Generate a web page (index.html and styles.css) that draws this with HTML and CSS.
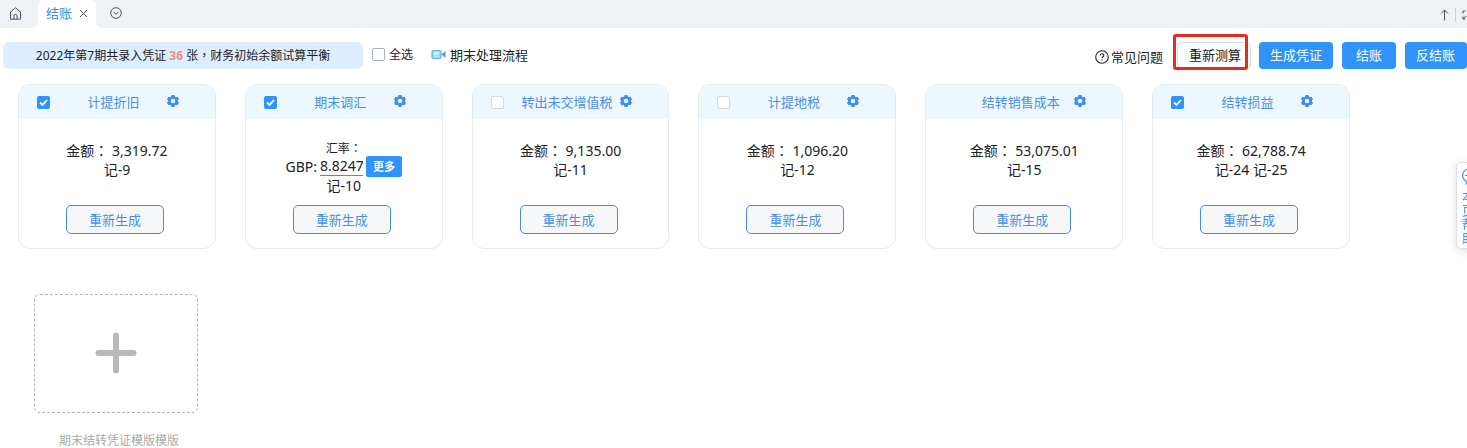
FILE: index.html
```html
<!DOCTYPE html>
<html lang="zh-CN">
<head>
<meta charset="utf-8">
<title>结账</title>
<link rel="stylesheet" href="styles.css">
</head>
<body>
<svg class="sprite" aria-hidden="true">
  <symbol id="gear" viewBox="0 0 12 12">
    <path fill-rule="evenodd" d="M4.600 0h2.800l.5 1.600 1 .6 1.700-.4L12 4.200l-1.100 1.300v1L12 7.800l-1.400 2.400-1.700-.4-1 .6-.5 1.600H4.600l-.5-1.600-1-.6-1.700.400L0 7.800l1.100-1.300v-1L0 4.200l1.400-2.400 1.700.4 1-.6zM6 3.700a2.300 2.300 0 1 0 0 4.600 2.300 2.300 0 0 0 0-4.600z"/>
  </symbol>
</svg>

<header class="tabs">
  <button class="icon-btn home" aria-label="首页">
    <svg width="13" height="13" viewBox="0 0 13 13"><path d="M1 5.500 6.500.8 12 5.500M1.600 5.200v7h9.800v-7M5 12V8.800a1.500 1.500 0 0 1 3 0V12"/></svg>
  </button>
  <div class="tab">
    <a class="tab-link" href="#">结账</a>
    <button class="icon-btn" aria-label="关闭">
      <svg width="9" height="9" viewBox="0 0 9 9"><path d="m1 1 7 7M8 1 1 8"/></svg>
    </button>
  </div>
  <button class="icon-btn more-tabs" aria-label="更多标签">
    <svg width="12" height="12" viewBox="0 0 12 12"><circle cx="6" cy="6" r="5.300"/><path d="m3.600 5 2.400 2.200L8.400 5"/></svg>
  </button>
  <div class="window-tools">
    <button class="icon-btn" aria-label="收起">
      <svg width="9" height="12" viewBox="0 0 9 12"><path d="M4.500 11.500V1M1 4.500 4.500 1 8 4.500"/></svg>
    </button>
    <span class="divider"></span>
    <button class="icon-btn" aria-label="全屏">
      <svg width="10" height="10" viewBox="0 0 10 10"><path d="M3.500 1H1v2.500M6.500 1H9v2.500M1 6.500V9h2.500M9 6.500V9H6.500M1 9l3-3"/></svg>
    </button>
  </div>
</header>

<div class="toolbar">
  <p class="summary">2022年第7期共录入凭证 <b>36</b> 张<span class="punct" lang="zh-TW">，</span>财务初始余额试算平衡</p>
  <label class="select-all"><input class="check" type="checkbox">全选</label>
  <a class="flow" href="#">
    <svg width="15" height="11" viewBox="0 0 15 11"><path class="cam" d="M2.500 1.500h6q1.500 0 1.500 1.500v5q0 1.500-1.500 1.500h-6Q1 9.500 1 8V3q0-1.500 1.500-1.500z"/><path class="lens" d="m10.500 5.500 4-3.500v7z"/><path class="spot" d="M3 4.500h4"/></svg>
    期末处理流程
  </a>
  <div class="actions">
    <a class="faq" href="#">
      <svg width="14" height="14" viewBox="0 0 14 14"><circle cx="7" cy="7" r="6.300"/><path d="M5.200 5.600c0-2.400 3.600-2.400 3.600-.1C8.800 6.800 7 6.800 7 8.300M7 9.400v1.200"/></svg>
      常见问题
    </a>
    <div class="marked"><button class="btn btn-plain">重新测算</button></div>
    <button class="btn">生成凭证</button>
    <button class="btn btn-wide">结账</button>
    <button class="btn">反结账</button>
  </div>
</div>

<main class="cards">
  <section class="card">
    <div class="card-head"><input class="check" type="checkbox" aria-label="计提折旧" checked><h2>计提折旧</h2><button class="gear" aria-label="设置"><svg><use href="#gear"/></svg></button></div>
    <div class="card-body"><p>金额<span class="punct" lang="zh-TW">：</span> 3,319.72</p><p>记-9</p></div>
    <button class="redo">重新生成</button>
  </section>
  <section class="card">
    <div class="card-head"><input class="check" type="checkbox" aria-label="期末调汇" checked><h2>期末调汇</h2><button class="gear" aria-label="设置"><svg><use href="#gear"/></svg></button></div>
    <div class="card-body">
      <p class="rate-title">汇率<span class="punct" lang="zh-TW">：</span></p>
      <div class="rate"><label for="gbp">GBP:</label><input id="gbp" type="text" value="8.8247"><button class="more">更多</button></div>
      <p>记-10</p>
    </div>
    <button class="redo">重新生成</button>
  </section>
  <section class="card">
    <div class="card-head"><input class="check" type="checkbox" aria-label="转出未交增值税"><h2>转出未交增值税</h2><button class="gear" aria-label="设置"><svg><use href="#gear"/></svg></button></div>
    <div class="card-body"><p>金额<span class="punct" lang="zh-TW">：</span> 9,135.00</p><p>记-11</p></div>
    <button class="redo">重新生成</button>
  </section>
  <section class="card">
    <div class="card-head"><input class="check" type="checkbox" aria-label="计提地税"><h2>计提地税</h2><button class="gear" aria-label="设置"><svg><use href="#gear"/></svg></button></div>
    <div class="card-body"><p>金额<span class="punct" lang="zh-TW">：</span> 1,096.20</p><p>记-12</p></div>
    <button class="redo">重新生成</button>
  </section>
  <section class="card">
    <div class="card-head"><span></span><h2>结转销售成本</h2><button class="gear" aria-label="设置"><svg><use href="#gear"/></svg></button></div>
    <div class="card-body"><p>金额<span class="punct" lang="zh-TW">：</span> 53,075.01</p><p>记-15</p></div>
    <button class="redo">重新生成</button>
  </section>
  <section class="card">
    <div class="card-head"><input class="check" type="checkbox" aria-label="结转损益" checked><h2>结转损益</h2><button class="gear" aria-label="设置"><svg><use href="#gear"/></svg></button></div>
    <div class="card-body"><p>金额<span class="punct" lang="zh-TW">：</span> 62,788.74</p><p>记-24 记-25</p></div>
    <button class="redo">重新生成</button>
  </section>
  <div class="add">
    <button class="add-box" aria-label="新增模版"><svg width="42" height="42" viewBox="0 0 42 42"><path d="M21 3.500v35M3.500 21h35"/></svg></button>
    <p>期末结转凭证模版模版</p>
  </div>
</main>

<button class="help">
  <svg width="16" height="18" viewBox="0 0 16 18"><path d="M5.500 13.500a6.500 6.500 0 1 1 5 0M5.500 13.500v2.500h5v-2.500M4 7.500h2l1-1.500 1 1.500h2"/></svg>
  <span>本页帮助</span>
</button>
</body>
</html>
```
FILE: styles.css
```css
* { box-sizing: border-box; }

body {
  margin: 0;
  min-height: 100vh;
  overflow: hidden;
  background: #fff;
  color: #222;
  font: 13px/18px "Noto Sans", "Noto Sans CJK SC", sans-serif;
}

p, h2 { margin: 0; }
a { color: inherit; text-decoration: none; }
button { margin: 0; padding: 0; border: 0; background: none; color: inherit; font: inherit; cursor: pointer; }
svg { display: block; fill: none; flex: none; }
.sprite { position: absolute; width: 0; height: 0; }
.punct { font-family: "Noto Sans CJK TC", sans-serif; line-height: 1; }

.tabs { display: flex; align-items: center; height: 28px; background: #eef2f5; padding-left: 9px; }
.icon-btn svg { stroke: #46505c; stroke-width: 1; }
.home, .more-tabs { padding-bottom: 2px; }
.tab {
  position: relative;
  display: flex;
  align-items: center;
  gap: 7px;
  height: 28px;
  margin: 0 14px 0 16px;
  padding: 0 8px 2px;
  border-radius: 6px 6px 0 0;
  background: #fff;
}
.tab::before, .tab::after { content: ""; position: absolute; bottom: 0; width: 6px; height: 6px; }
.tab::before { right: 100%; background: radial-gradient(circle at 0 0, #eef2f5 6px, #fff 6px); }
.tab::after { left: 100%; background: radial-gradient(circle at 100% 0, #eef2f5 6px, #fff 6px); }
.tab-link { color: #3f8ae8; }
.window-tools { display: flex; align-items: center; gap: 6px; margin: 2px -5px 0 auto; }
.divider { width: 1px; height: 14px; background: #c9ced4; }

.toolbar { display: flex; align-items: center; height: 27px; margin-top: 14px; padding-left: 3px; }
.summary {
  width: 360px;
  height: 27px;
  border-radius: 6px;
  background: #deedff;
  font-size: 12px;
  line-height: 27px;
  text-align: center;
}
.summary b { color: #f28b7d; }

.check {
  flex: none;
  appearance: none;
  width: 13px;
  height: 13px;
  margin: 0;
  border: 1px solid #d9d9d9;
  border-radius: 2px;
  background: #fff;
}
.check:checked {
  border-color: #2f93fb;
  background: #2f93fb url("data:image/svg+xml,%3Csvg xmlns='http://www.w3.org/2000/svg' viewBox='0 0 11 11'%3E%3Cpath d='M2 5.500l2.500 2.500L9 3' fill='none' stroke='white' stroke-width='1.800'/%3E%3C/svg%3E");
}
.select-all { display: flex; align-items: center; gap: 4px; margin-left: 9px; padding-bottom: 1px; font-size: 12px; }
.select-all .check { border-color: #a9afc4; margin-bottom: 2px; }
.flow { display: flex; align-items: center; gap: 4px; margin-left: 18px; padding-bottom: 2px; }
.cam { fill: #a9def3; stroke: #5fb0d8; stroke-width: 1.2; }
.lens { fill: #4c9fd0; }
.spot { stroke: #fff; stroke-width: 1.5; }

.actions { display: flex; align-items: center; gap: 9px; margin-left: auto; }
.faq { display: flex; align-items: center; gap: 2px; padding-top: 2px; }
.faq svg { stroke: #222; stroke-width: 1.1; }
.btn { height: 27px; padding: 0 11px 2px; border-radius: 4px; background: #2f93fb; color: #fff; white-space: nowrap; }
.btn-wide { padding: 0 14px 2px; }
.btn:last-child { padding-right: 12px; }
.marked .btn-plain { padding: 0 9px 2px 11px; border: 1px solid #d9dee6; background: #f8fcff; color: #222; }
.marked { position: relative; margin: 0 -1px 0 5px; }
.marked::after {
  content: "";
  position: absolute;
  inset: -8px 3px -1px -4px;
  border: 3px solid #e8291f;
  border-radius: 3px;
  pointer-events: none;
}

.cards {
  display: grid;
  grid-template-columns: repeat(auto-fill, minmax(190px, 1fr));
  gap: 45px 29px;
  padding: 15px 117px 0 18px;
}
.card {
  display: flex;
  flex-direction: column;
  align-items: center;
  height: 165px;
  padding-bottom: 14px;
  border: 1px solid #e3eaf0;
  border-radius: 12px;
  overflow: hidden;
}
.card-head {
  display: grid;
  grid-template-columns: 13px 1fr 12px;
  align-items: center;
  width: 100%;
  height: 34px;
  padding: 0 36px 0 18px;
  background: #edf7ff;
}
.card-head h2 { padding-left: 10px; color: #4a90e2; font-size: 13px; font-weight: 400; text-align: center; white-space: nowrap; }
.gear { padding-bottom: 2px; }
.gear svg { width: 12px; height: 12px; fill: #3d8ef0; }
.card-body {
  flex: 1;
  display: flex;
  flex-direction: column;
  align-items: center;
  padding-top: 22px;
  font-size: 14px;
  line-height: 19px;
}
.rate-title { font-size: 12px; line-height: 15px; }
.rate { display: flex; align-items: center; gap: 3px; height: 20px; }
.rate input {
  width: 43px;
  height: 20px;
  padding: 0;
  border: 0;
  border-bottom: 1px solid #22a3b8;
  background: none;
  color: inherit;
  font: inherit;
}
.more { width: 36px; height: 21px; border-radius: 2px; background: #2f93fb; color: #fff; font-size: 11px; font-weight: 700; line-height: 21px; }
.redo { width: 98px; height: 29px; margin-right: 4px; border: 1px solid #4090dc; border-radius: 5px; background: #f6f7f8; color: #4a90e2; }

.add { display: flex; flex-direction: column; align-items: center; gap: 19px; padding-right: 2px; color: #aaa; font-size: 12px; }
.add-box {
  display: flex;
  align-items: center;
  justify-content: center;
  width: 164px;
  height: 119px;
  padding-bottom: 2px;
  border: 1px dashed #b5b5b5;
  border-radius: 6px;
}
.add-box svg { stroke: #b9b9b9; stroke-width: 6; stroke-linecap: round; }
.add p { padding-left: 6px; }

.help {
  position: fixed;
  top: 162px;
  right: -14px;
  display: flex;
  flex-direction: column;
  align-items: center;
  gap: 3px;
  width: 25px;
  height: 87px;
  padding-top: 5px;
  border: 1px solid #dcdfe3;
  border-radius: 5px;
  background: #fff;
  box-shadow: 0 2px 8px #0002;
  color: #3d8ef0;
}
.help svg { stroke: #3d8ef0; stroke-width: 1.2; }
.help span { width: 13px; font-size: 13px; line-height: 14px; }
```
